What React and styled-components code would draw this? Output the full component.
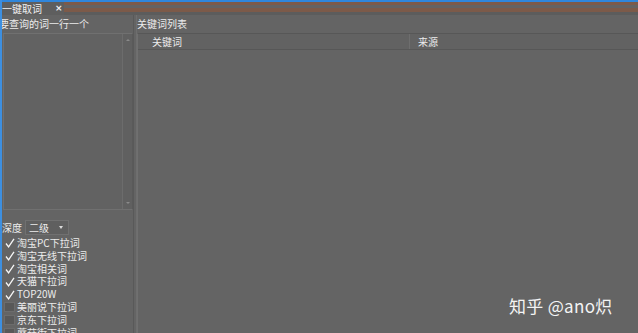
import React from "react";
import styled, { createGlobalStyle } from "styled-components";

const Global = createGlobalStyle`
  html, body { margin: 0; padding: 0; background: #646464; overflow: hidden; }
  * { box-sizing: border-box; }
`;

const Window = styled.div`
  position: relative;
  width: 638px;
  height: 333px;
  background: #646464;
  border-left: 2px solid #3d8fe0;
  display: flex;
  flex-direction: column;
  font-family: "Noto Sans CJK SC", "Noto Sans", sans-serif;
  font-size: 10px;
  color: #ececec;
  overflow: hidden;
`;

const TopBar = styled.div`
  height: 15px;
  border-top: 2px solid #2f86dc;
  background: linear-gradient(
    to bottom,
    #7c5a49 0px,
    #7c5a49 3px,
    #646262 3px,
    #646262 6px,
    #7c5a49 6px,
    #7c5a49 10px,
    #5c5c5c 10px,
    #5c5c5c 13px
  );
  display: flex;
  align-items: stretch;
  flex-shrink: 0;
`;

const Tab = styled.div`
  width: 62px;
  background: #5e5e5e;
  display: flex;
  align-items: center;
  gap: 13px;
  line-height: 1;
  font-size: 10px;
  color: #f2f2f2;
`;

const Close = styled.span`
  font-family: "DejaVu Sans", sans-serif;
  font-size: 9px;
  font-weight: bold;
`;

const Main = styled.div`
  flex: 1;
  display: flex;
  min-height: 0;
`;

const LeftPanel = styled.div`
  width: 131px;
  display: flex;
  flex-direction: column;
  flex-shrink: 0;
  & > * { flex-shrink: 0; }
`;

const PanelTitle = styled.div`
  height: 18px;
  line-height: 17px;
  white-space: nowrap;
  flex-shrink: 0;
  margin-left: ${(p) => p.$indent || 0}px;
`;

const TextArea = styled.div`
  margin-left: 1px;
  height: 177px;
  border: 1px solid #707070;
  border-right-color: #5a5a5a;
  background: #626262;
  display: flex;
  justify-content: flex-end;
`;

const ScrollBar = styled.div`
  width: 10px;
  border-left: 1px solid #6c6c6c;
  background: #606060;
  display: flex;
  flex-direction: column;
  justify-content: space-between;
  align-items: center;
  padding: 5px 0;
`;

const Arrow = styled.div`
  width: 0;
  height: 0;
  border-left: 2px solid transparent;
  border-right: 2px solid transparent;
  ${(p) => (p.$up ? "border-bottom: 2px solid #8a8a8a;" : "border-top: 2px solid #8a8a8a;")}
`;

const DepthRow = styled.div`
  display: flex;
  align-items: center;
  gap: 3px;
  margin-top: 9px;
  height: 16px;
`;

const Select = styled.div`
  width: 44px;
  height: 15px;
  border: 1px solid #707070;
  background: #5f5f5f;
  display: flex;
  align-items: center;
  justify-content: space-between;
  padding: 0 5px 0 3px;
`;

const Caret = styled.span`
  width: 0;
  height: 0;
  border-left: 2.5px solid transparent;
  border-right: 2.5px solid transparent;
  border-top: 3px solid #dcdcdc;
`;

const CheckList = styled.div`
  display: flex;
  flex-direction: column;
  margin-top: 2px;
`;

const CheckRow = styled.div`
  height: 12.8px;
  display: flex;
  align-items: center;
  gap: 2px;
  padding-left: 2px;
  white-space: nowrap;
  flex-shrink: 0;
`;

const Label = styled.div`
  height: 12.8px;
  line-height: 12.8px;
  overflow: visible;
`;

const Box = styled.span`
  width: 11px;
  height: 10px;
  display: flex;
  align-items: center;
  justify-content: center;
  ${(p) =>
    p.$checked
      ? "color: #f6f6f6;"
      : "background: #585858; border: 1px solid #6c6c6c;"}
`;

const Divider = styled.div`
  width: 4px;
  border-left: 1px solid #595959;
  border-right: 1px solid #6e6e6e;
  flex-shrink: 0;
`;

const RightPanel = styled.div`
  flex: 1;
  display: flex;
  flex-direction: column;
`;

const Table = styled.div`
  flex: 1;
  border-top: 1px solid #575757;
  border-left: 1px solid #707070;
  display: flex;
  flex-direction: column;
`;

const HeaderRow = styled.div`
  height: 16px;
  display: grid;
  grid-template-columns: 272px 1fr;
  border-bottom: 1px solid #575757;
  background: #626262;
`;

const HeaderCell = styled.div`
  line-height: 15px;
  padding-left: ${(p) => p.$pad}px;
  border-right: ${(p) => (p.$sep ? "1px solid #6e6e6e" : "none")};
`;

const Watermark = styled.div`
  position: absolute;
  left: 507px;
  top: 293px;
  font-family: "Noto Sans CJK SC", "Noto Sans", sans-serif;
  font-size: 17px;
  color: #f4f4f4;
  letter-spacing: 0.3px;
`;

const items = [
  ["淘宝PC下拉词", true],
  ["淘宝无线下拉词", true],
  ["淘宝相关词", true],
  ["天猫下拉词", true],
  ["TOP20W", true],
  ["美丽说下拉词", false],
  ["京东下拉词", false],
  ["蘑菇街下拉词", false],
];

const Check = () => (
  <svg width="10" height="10" viewBox="0 0 10 10">
    <path d="M1 5.5 L3.6 8.8 L9 0.8" fill="none" stroke="currentColor" strokeWidth="1.3" />
  </svg>
);

export default function App() {
  return (
    <>
      <Global />
      <Window>
        <TopBar>
          <Tab>
            <span>一键取词</span>
            <Close>×</Close>
          </Tab>
        </TopBar>
        <Main>
          <LeftPanel>
            <PanelTitle $indent={-3}>要查询的词一行一个</PanelTitle>
            <TextArea>
              <ScrollBar>
                <Arrow $up />
                <Arrow />
              </ScrollBar>
            </TextArea>
            <DepthRow>
              <span>深度</span>
              <Select>
                <span>二级</span>
                <Caret />
              </Select>
            </DepthRow>
            <CheckList>
              {items.map(([label, checked]) => (
                <CheckRow key={label}>
                  <Box $checked={checked}>{checked ? <Check /> : null}</Box>
                  <Label>{label}</Label>
                </CheckRow>
              ))}
            </CheckList>
          </LeftPanel>
          <Divider />
          <RightPanel>
            <PanelTitle>关键词列表</PanelTitle>
            <Table>
              <HeaderRow>
                <HeaderCell $pad={14} $sep>关键词</HeaderCell>
                <HeaderCell $pad={8}>来源</HeaderCell>
              </HeaderRow>
            </Table>
          </RightPanel>
        </Main>
        <Watermark>知乎 @ano炽</Watermark>
      </Window>
    </>
  );
}
